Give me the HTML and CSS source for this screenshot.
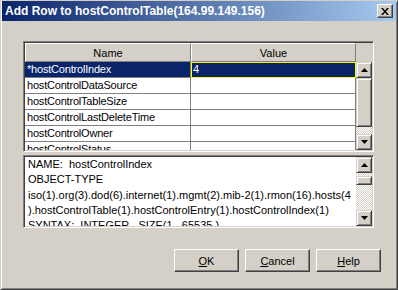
FILE: index.html
```html
<!DOCTYPE html>
<html lang="en">
<head>
  <meta charset="UTF-8" />
  <title>Add Row to hostControlTable(164.99.149.156)</title>
  <link rel="stylesheet" href="styles.css">
</head>
<body>
  <div class="window">
    <!-- Title bar -->
    <div class="title-bar">
      <span class="title-text">Add Row to hostControlTable(164.99.149.156)</span>
      <span class="close-btn">
        <svg width="8" height="7" viewBox="0 0 8 7"><path d="M0 0h2l2 2.5 2-2.5h2l-3 3.5 3 3.5h-2l-2-2.5-2 2.5h-2l3-3.5z" fill="#000"/></svg>
      </span>
    </div>

    <div class="dialog-body">
      <!-- Table of columns to fill in -->
      <div class="sunken table-box">
        <div class="table-view">
          <div class="table-header">
            <div class="th name-col">Name</div>
            <div class="th value-col">Value</div>
          </div>
          <div class="row selected">
            <div class="cell name-col">*hostControlIndex</div>
            <div class="cell value-col editor">4</div>
          </div>
          <div class="row">
            <div class="cell name-col">hostControlDataSource</div>
            <div class="cell value-col"></div>
          </div>
          <div class="row">
            <div class="cell name-col">hostControlTableSize</div>
            <div class="cell value-col"></div>
          </div>
          <div class="row">
            <div class="cell name-col">hostControlLastDeleteTime</div>
            <div class="cell value-col"></div>
          </div>
          <div class="row">
            <div class="cell name-col">hostControlOwner</div>
            <div class="cell value-col"></div>
          </div>
          <div class="row">
            <div class="cell name-col">hostControlStatus</div>
            <div class="cell value-col"></div>
          </div>
        </div>
        <div class="vscroll">
          <div class="corner"></div>
          <div class="sb-btn">
            <svg width="7" height="4" viewBox="0 0 7 4"><path d="M3.5 0L7 4H0z" fill="#000"/></svg>
          </div>
          <div class="sb-thumb table-thumb"></div>
          <div class="sb-track"></div>
          <div class="sb-btn">
            <svg width="7" height="4" viewBox="0 0 7 4"><path d="M0 0h7L3.5 4z" fill="#000"/></svg>
          </div>
        </div>
      </div>

      <!-- Description of the selected column -->
      <div class="sunken text-box">
        <div class="text-view">
          <div class="text-line">NAME:  hostControlIndex</div>
          <div class="text-line">OBJECT-TYPE</div>
          <div class="text-line">iso(1).org(3).dod(6).internet(1).mgmt(2).mib-2(1).rmon(16).hosts(4</div>
          <div class="text-line">).hostControlTable(1).hostControlEntry(1).hostControlIndex(1)</div>
          <div class="text-line">SYNTAX:  INTEGER   SIZE(1...65535 )</div>
        </div>
        <div class="vscroll">
          <div class="sb-btn">
            <svg width="7" height="4" viewBox="0 0 7 4"><path d="M3.5 0L7 4H0z" fill="#000"/></svg>
          </div>
          <div class="sb-track text-track">
            <div class="sb-thumb text-thumb"></div>
          </div>
          <div class="sb-btn">
            <svg width="7" height="4" viewBox="0 0 7 4"><path d="M0 0h7L3.5 4z" fill="#000"/></svg>
          </div>
        </div>
      </div>

      <div class="button-row">
        <div class="btn"><span class="mn">O</span>K</div>
        <div class="btn"><span class="mn">C</span>ancel</div>
        <div class="btn"><span class="mn">H</span>elp</div>
      </div>
    </div>
  </div>
</body>
</html>
```

FILE: styles.css
```css
/* Global */
html, body {
  margin: 0;
  padding: 0;
}

body {
  width: 398px;
  height: 290px;
  overflow: hidden;
  background: #d4d0c8;
  font-family: "Liberation Sans", Arial, sans-serif;
  font-size: 11px;
  color: #000;
}

/* Window frame */
.window {
  box-sizing: border-box;
  width: 398px;
  height: 290px;
  border: 1px solid;
  border-color: #d4d0c8 #404040 #404040 #d4d0c8;
  padding: 0 1px 1px 1px;
  box-shadow: inset 1px 1px #fff, inset -1px -1px #808080;
  display: flex;
  flex-direction: column;
}

.title-bar {
  height: 20px;
  flex-shrink: 0;
  display: flex;
  align-items: center;
  justify-content: space-between;
  padding: 0 3px 0 3px;
  background: linear-gradient(to right, #0a246a, #a6caf0);
  color: #fff;
  font-weight: bold;
  font-size: 12px;
}

.close-btn {
  box-sizing: border-box;
  width: 16px;
  height: 14px;
  display: flex;
  align-items: center;
  justify-content: center;
  background: #d4d0c8;
  border: 1px solid;
  border-color: #fff #404040 #404040 #fff;
  box-shadow: inset -1px -1px #808080;
}

/* Dialog content */
.dialog-body {
  flex: 1;
  display: flex;
  flex-direction: column;
  padding: 20px 0 0 21px;
}

.sunken {
  box-sizing: border-box;
  width: 351px;
  display: flex;
  border: 1px solid;
  border-color: #808080 #fff #fff #808080;
  padding: 1px;
  box-shadow: inset 1px 1px #404040, inset -1px -1px #d4d0c8;
}

.table-box {
  height: 111px;
}

.table-view {
  width: 331px;
  overflow: hidden;
  display: flex;
  flex-direction: column;
  background: #fff;
}

.table-header {
  display: flex;
  height: 19px;
  flex-shrink: 0;
  background: #d4d0c8;
}

.th {
  box-sizing: border-box;
  display: flex;
  align-items: center;
  justify-content: center;
  border: 1px solid;
  border-color: #fff #808080 #808080 #fff;
}

.name-col {
  width: 166px;
}

.value-col {
  width: 165px;
}

.row {
  display: flex;
  height: 16px;
  flex-shrink: 0;
}

.cell {
  box-sizing: border-box;
  border-right: 1px solid #808080;
  border-bottom: 1px solid #808080;
  padding-left: 2px;
  line-height: 15px;
  white-space: nowrap;
  overflow: hidden;
  letter-spacing: -0.2px;
}

.row.selected .cell {
  background: #0a246a;
  color: #fff;
}

.cell.editor {
  border: 1px solid #ffff00;
  padding-left: 1px;
  line-height: 13px;
}

/* Scrollbars */
.vscroll {
  width: 16px;
  display: flex;
  flex-direction: column;
}

.corner {
  height: 19px;
  flex-shrink: 0;
  background: #d4d0c8;
}

.sb-btn,
.sb-thumb {
  box-sizing: border-box;
  background: #d4d0c8;
  border: 1px solid;
  border-color: #d4d0c8 #404040 #404040 #d4d0c8;
  box-shadow: inset 1px 1px #fff, inset -1px -1px #808080;
}

.sb-btn {
  height: 16px;
  flex-shrink: 0;
  display: flex;
  align-items: center;
  justify-content: center;
}

.table-thumb {
  height: 49px;
  flex-shrink: 0;
}

.sb-track {
  flex: 1;
  background-image: repeating-conic-gradient(#fff 0 25%, #d4d0c8 0 50%);
  background-size: 2px 2px;
}

.text-track {
  padding-top: 3px;
}

.text-thumb {
  height: 9px;
}

.text-box {
  height: 73px;
  margin-top: 3px;
}

.text-view {
  width: 328px;
  padding-left: 3px;
  overflow: hidden;
  background: #fff;
  line-height: 15.3px;
}

.text-line {
  white-space: pre;
}

/* Buttons */
.button-row {
  display: flex;
  justify-content: flex-end;
  gap: 6px;
  margin-top: 21px;
  padding-right: 15px;
}

.btn {
  box-sizing: border-box;
  width: 65px;
  height: 23px;
  display: flex;
  align-items: center;
  justify-content: center;
  border: 1px solid;
  border-color: #fff #404040 #404040 #fff;
  box-shadow: inset -1px -1px #808080;
}

.mn {
  text-decoration: underline;
}
```
